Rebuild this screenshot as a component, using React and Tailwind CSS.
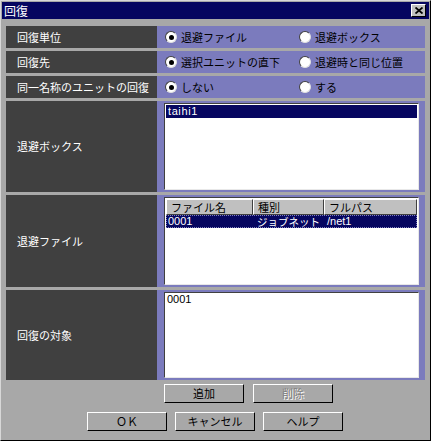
import React from "react";

const jp = { fontFamily: '"Noto Sans CJK JP", "Noto Sans", sans-serif' };
const mono = { fontFamily: '"Liberation Sans", "DejaVu Sans", sans-serif' };

function Radio({ checked, label }) {
  return (
    <div className="flex items-center gap-[4px]">
      <div className="w-[12px] h-[12px] rounded-full bg-white border border-t-[#404040] border-l-[#404040] border-b-[#e0e0e0] border-r-[#e0e0e0] flex items-center justify-center">
        {checked && <div className="w-[5px] h-[5px] rounded-full bg-black" />}
      </div>
      <span className="text-[11px] leading-none text-black" style={jp}>{label}</span>
    </div>
  );
}

function Row({ label, h, children }) {
  return (
    <div className="flex" style={{ height: h }}>
      <div className="w-[151px] bg-[#404040] flex items-center pl-[11px] text-white text-[11px]" style={jp}>
        {label}
      </div>
      <div className="flex-1 bg-[#7b7bbd]">{children}</div>
    </div>
  );
}

function Btn({ children, disabled, w = "w-[80px]" }) {
  return (
    <div className={`${w} h-[19px] bg-[#a8a8a8] border border-t-white border-l-white border-b-black border-r-black flex items-center justify-center text-[11px] ${disabled ? "text-[#808080] [text-shadow:1px_1px_0_#ffffff]" : "text-black"}`} style={jp}>
      {children}
    </div>
  );
}

const sunken = "border border-t-[#404040] border-l-[#404040] border-b-[#e8e8e8] border-r-[#e8e8e8] bg-white";

export default function App() {
  return (
    <div className="w-[431px] h-[441px] bg-[#a8a8a8] border border-t-[#d8d8d8] border-l-[#d8d8d8] border-b-black border-r-black flex flex-col">
      <div className="mx-[1px] mt-[1px] h-[17px] bg-[#060660] flex items-center justify-between pl-[2px] pr-[3px]">
        <span className="text-white text-[12px] leading-none" style={jp}>回復</span>
        <div className="w-[15px] h-[13px] bg-[#c0c0c0] border border-t-white border-l-white border-b-black border-r-black flex items-center justify-center">
          <svg width="8" height="7" viewBox="0 0 8 7">
            <path d="M0.5 0.5 L7.5 6.5 M7.5 0.5 L0.5 6.5" stroke="#000" strokeWidth="1.8" />
          </svg>
        </div>
      </div>
      <div className="flex flex-col gap-[3px] pl-[5px] pr-[5px] pt-[7px]">
        <Row label="回復単位" h={22}>
          <div className="flex items-center h-full pl-[8px]">
            <div className="w-[134px]"><Radio checked label="退避ファイル" /></div>
            <Radio label="退避ボックス" />
          </div>
        </Row>
        <Row label="回復先" h={22}>
          <div className="flex items-center h-full pl-[8px]">
            <div className="w-[134px]"><Radio checked label="選択ユニットの直下" /></div>
            <Radio label="退避時と同じ位置" />
          </div>
        </Row>
        <Row label="同一名称のユニットの回復" h={22}>
          <div className="flex items-center h-full pl-[8px]">
            <div className="w-[134px]"><Radio checked label="しない" /></div>
            <Radio label="する" />
          </div>
        </Row>
        <Row label="退避ボックス" h={91}>
          <div className="pt-[2px] pl-[7px] pr-[6px] h-full pb-[2px]">
            <div className={`${sunken} h-full p-[1px]`}>
              <div className="h-[13px] bg-[#060660] text-white text-[11px] leading-[13px] pl-[2px] tracking-[0.6px]" style={mono}>taihi1</div>
            </div>
          </div>
        </Row>
        <Row label="退避ファイル" h={92}>
          <div className="pt-[2px] pl-[7px] pr-[6px] h-full pb-[2px]">
            <div className={`${sunken} h-full p-[1px]`}>
              <div className="flex h-[16px] text-[11px]" style={jp}>
                <div className="w-[87px] bg-[#c0c0c0] border border-t-white border-l-white border-b-[#404040] border-r-[#404040] pl-[4px] leading-[14px]">ファイル名</div>
                <div className="w-[71px] bg-[#c0c0c0] border border-t-white border-l-white border-b-[#404040] border-r-[#404040] pl-[4px] leading-[14px]">種別</div>
                <div className="flex-1 bg-[#c0c0c0] border border-t-white border-l-white border-b-[#404040] border-r-[#404040] pl-[4px] leading-[14px]">フルパス</div>
              </div>
              <div className="h-[13px] bg-[#060660] text-white text-[11px] leading-[11px] flex border border-dotted border-[#8080c0] whitespace-nowrap">
                <div className="w-[90px] pl-[1px]" style={mono}>0001</div>
                <div className="w-[69px] text-[10.5px]" style={jp}>ジョブネット</div>
                <div className="flex-1 pl-[1px]" style={mono}>/net1</div>
              </div>
            </div>
          </div>
        </Row>
        <Row label="回復の対象" h={90}>
          <div className="pt-[2px] pl-[7px] pr-[6px] h-full pb-[2px]">
            <div className={`${sunken} h-full px-[2px] text-[11px] leading-[13px] text-black`} style={mono}>
              0001
            </div>
          </div>
        </Row>
      </div>
      <div className="flex gap-[9px] pl-[163px] mt-[4px]">
        <Btn>追加</Btn>
        <Btn disabled>削除</Btn>
      </div>
      <div className="flex gap-[8px] pl-[86px] mt-[9px]">
        <Btn>ＯＫ</Btn>
        <Btn>キャンセル</Btn>
        <Btn>ヘルプ</Btn>
      </div>
    </div>
  );
}
